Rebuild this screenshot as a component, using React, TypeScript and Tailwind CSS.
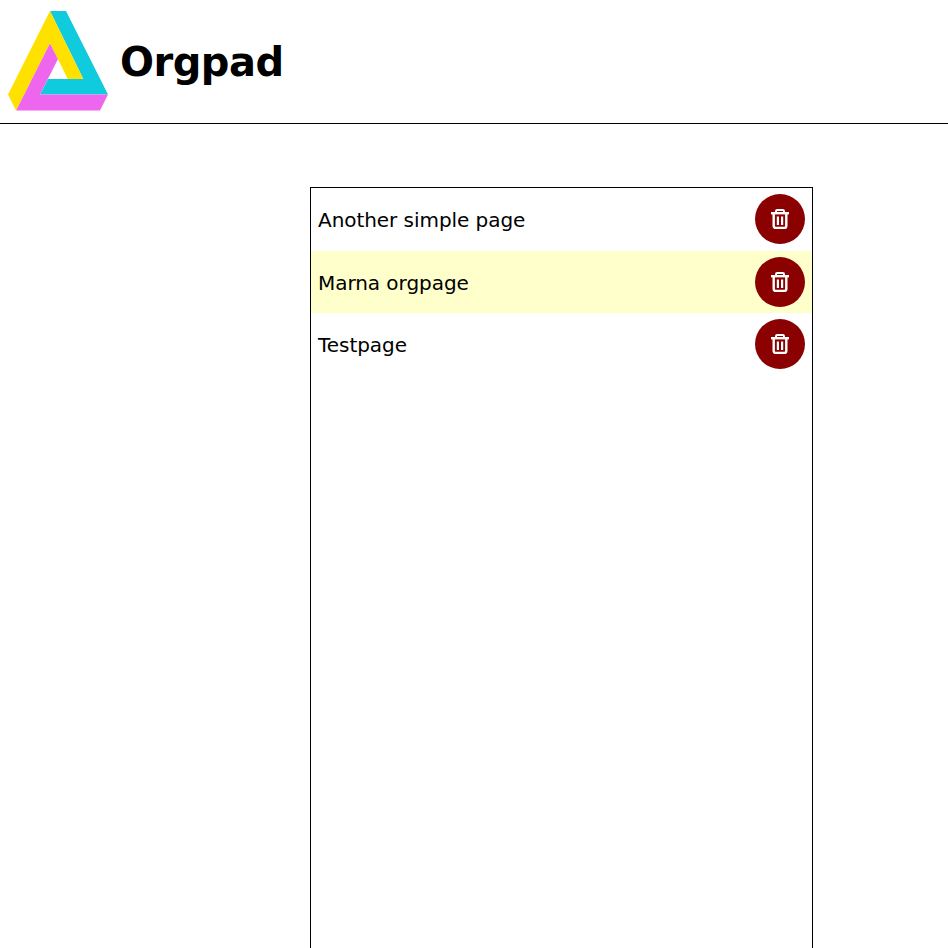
const pages = ["Another simple page", "Marna orgpage", "Testpage"];

function Logo() {
  return (
    <svg width="120" height="123" viewBox="0 0 120 123" className="shrink-0 block">
      <polygon points="50,11 66,11 108,94.5 40,94.5 48,79 83.3,79" fill="#0fcbdd" />
      <polygon points="50,43 58,59 40,94.5 108,94.5 100,110.5 16,110.5" fill="#ee66ee" />
      <polygon points="50,11 83.3,79 67.7,79 50,43 16,110.5 8,94.5" fill="#ffe100" />
    </svg>
  );
}

function Trash() {
  return (
    <svg width="18" height="20" viewBox="0 0 18 20" fill="none" stroke="white" className="block">
      <path d="M5 4V2.2A1.2 1.2 0 0 1 6.200 1h5.600A1.2 1.2 0 0 1 13 2.200V4" strokeWidth="2" />
      <path d="M0 4.200H18" strokeWidth="2.400" />
      <path d="M2.700 4.500V17a2 2 0 0 0 2 2h8.600a2 2 0 0 0 2-2V4.500" strokeWidth="2.400" />
      <path d="M6.900 7.500V16M11.100 7.500V16" strokeWidth="2.200" />
    </svg>
  );
}

export default function App() {
  return (
    <div className="h-[948px] overflow-hidden bg-white text-black font-['DejaVu_Sans',sans-serif]">
      <header className="flex h-[124px] items-center border-b border-black">
        <Logo />
        <h1 className="text-[40px] font-bold leading-none tracking-[-0.5px]">Orgpad</h1>
      </header>
      <main className="ml-[310px] mt-[63px] h-[800px] w-[503px] border border-black">
        {pages.map((name, i) => (
          <div
            key={name}
            className={`flex h-[62.5px] items-center justify-between px-[7px] ${i === 1 ? "bg-[#ffffcc]" : ""}`}
          >
            <span className="mt-[2px] text-[20px] tracking-[-0.05px]">{name}</span>
            <button className="flex h-[50px] w-[50px] items-center justify-center rounded-full bg-[#8b0000] text-white">
              <Trash />
            </button>
          </div>
        ))}
      </main>
    </div>
  );
}
